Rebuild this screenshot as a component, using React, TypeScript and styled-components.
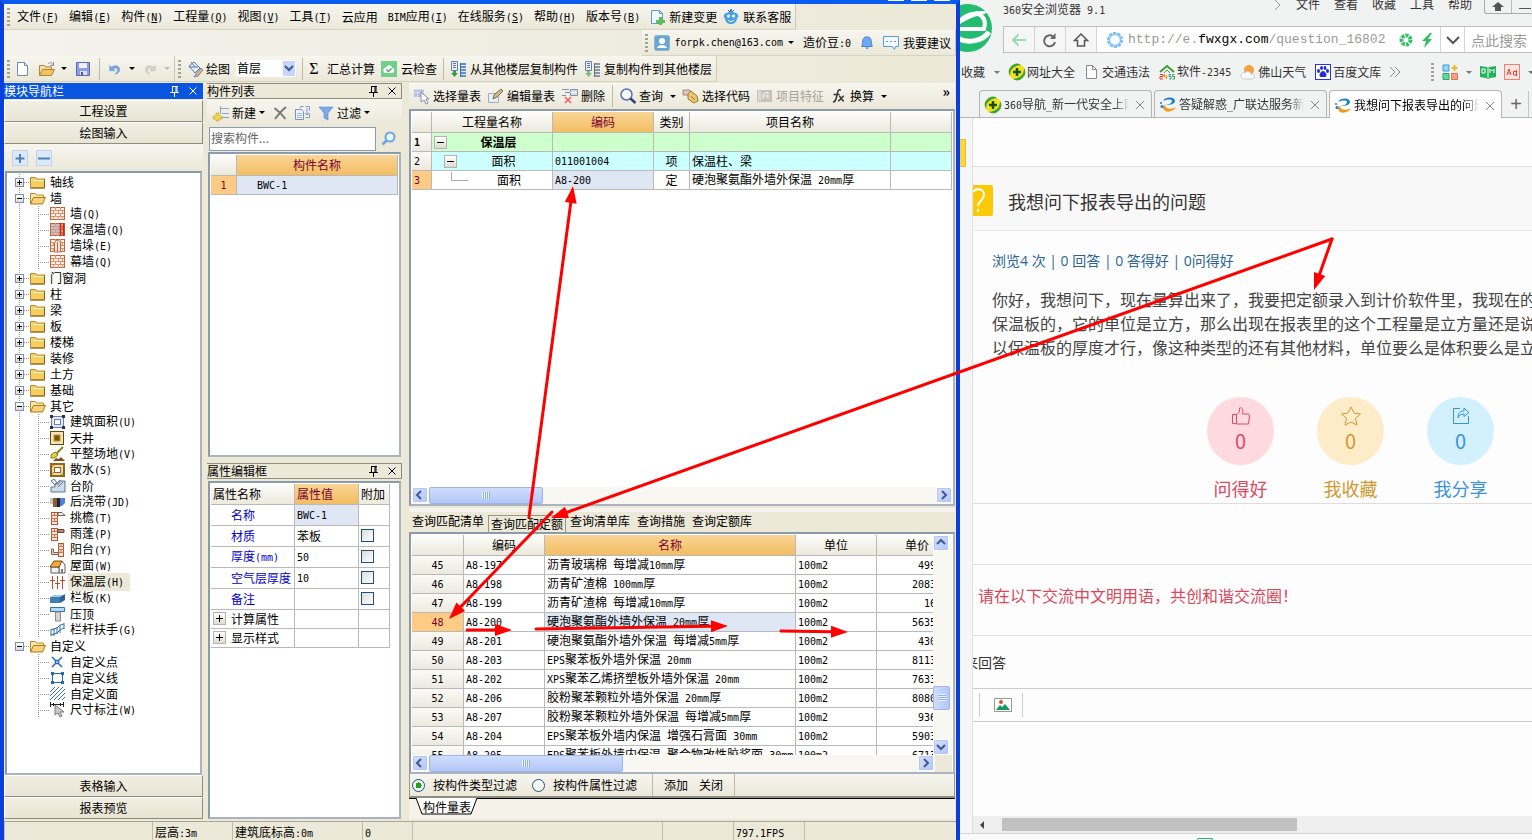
import React from "react";
import styled, { createGlobalStyle, css } from "styled-components";

const GlobalStyle = createGlobalStyle`
  *, *::before, *::after { box-sizing: border-box; }
  html, body { margin: 0; padding: 0; }
  body {
    font-family: "Noto Sans CJK SC", "Liberation Sans", sans-serif;
    font-size: 12px;
    line-height: 16px;
    color: #000;
    overflow: hidden;
  }
  button, input, select, textarea { font: inherit; color: inherit; margin: 0; }
  button { padding: 0; border: 0; background: none; white-space: nowrap; }
  a { color: inherit; text-decoration: none; }
  h1, h2, p, ul { margin: 0; padding: 0; font-weight: inherit; font-size: inherit; list-style: none; }
  svg { display: block; flex: none; }
`;

/* ---------- text ---------- */

const Half = styled.span`
  font-family: "DejaVu Sans Mono", monospace;
  font-size: 10px;
  white-space: pre;
`;

/** Sets the latin runs of a label in a half-width face beside full-width characters. */
function Txt({ children }: { children: string }) {
  return (
    <>
      {children.split(/([\x20-\x7e]+)/).map((part, i) =>
        /^[\x20-\x7e]+$/.test(part) ? <Half key={i}>{part}</Half> : part
      )}
    </>
  );
}

/* ---------- icons ---------- */

type IconName = string;

const brick = (
  <>
    <rect x="0.500" y="1.500" width="14" height="12" fill="#fdeee4" stroke="#c4623a" />
    <path d="M1 4.500h13M1 7.500h13M1 10.500h13M5.500 1v3M10.500 1v3M3.500 5v3M8.500 5v3M12.500 5v3M5.500 8v3M10.500 8v3M3.500 11v3M8.500 11v3M12.500 11v3" stroke="#dd9470" fill="none" />
  </>
);

const copyFloors = (flip: boolean) => (
  <>
    <path d="M1.500 0.500h6v9h-6z" fill="#e8eef8" stroke="#6b7f9e" />
    <path d="M3 2.500h3M3 4.500h3M3 6.500h3" stroke="#5b77b5" />
    <path d="M10 3h6M10 6h6M10 9h6M10 12h6M10 15h6" stroke={flip ? "#8b96a6" : "#5b8fdc"} strokeWidth="2" />
    <path d="M10.500 2v14" stroke={flip ? "#68717e" : "#3f6cb0"} />
    <path d="M3 10v2H1l3.500 4L8 12H6v-2z" fill={flip ? "#7fc07f" : "#3f9a4f"} />
  </>
);

const icons: Record<IconName, React.ReactNode> = {
  folder: (
    <>
      <path d="M0.500 3.500h5l1 1.500h8v9h-14z" fill="#f6cd62" stroke="#b58a2c" />
      <path d="M1 6.500h13" stroke="#fff0b8" />
      <path d="M14.500 5v9h-14" stroke="#7d6018" fill="none" />
    </>
  ),
  folderOpen: (
    <>
      <path d="M0.500 13.500v-10h5l1 1.500h7v3" fill="#f9e6ae" stroke="#b58a2c" />
      <path d="M3.500 7.500h12l-3 6.500h-12z" fill="#f8d276" stroke="#a57b22" />
    </>
  ),
  wall: brick,
  wallIns: (
    <>
      {brick}
      <path d="M1 2h8v11H1z" fill="#b9a5a8" opacity="0.700" />
      <path d="M10.500 1v13M13.500 1v13" stroke="#c22f1c" strokeWidth="2" />
    </>
  ),
  wallPier: (
    <>
      {brick}
      <path d="M4.500 4.500c2-3 4-3 6 0V14h-6z" fill="#fde9dc" stroke="#c4623a" />
      <path d="M7.500 4v10" stroke="#c4623a" />
    </>
  ),
  area: (
    <>
      <rect x="1.500" y="2.500" width="12" height="11" fill="#dfe7f5" stroke="#6d7fa5" />
      <rect x="4.500" y="5.500" width="6" height="5" fill="#fff" stroke="#6d7fa5" />
      <path d="M0 1h3v3H0zM12 1h3v3h-3zM0 12h3v3H0zM12 12h3v3h-3z" fill="#26324c" />
    </>
  ),
  patio: (
    <>
      <rect x="0.500" y="1.500" width="13" height="13" fill="#f2e7b4" stroke="#5d4a14" />
      <rect x="4" y="5" width="6" height="6" fill="#7a5510" stroke="#c49a35" />
    </>
  ),
  ground: (
    <>
      <path d="M13 1L6 8" stroke="#7f8a1e" strokeWidth="2" />
      <path d="M1 9l4-3 3 3-4 3-3 0z" fill="#e6d23a" stroke="#8a7a18" />
      <path d="M3 15l3-3 3 1 2-2 4 4z" fill="#8a4a17" />
    </>
  ),
  apron: (
    <>
      <rect x="1" y="2" width="13" height="12" fill="#f1d9a3" stroke="#8d6420" strokeWidth="2" />
      <rect x="4.500" y="5.500" width="6" height="5" fill="#fff" stroke="#8d6420" />
      <path d="M2 5l2-2M11 13l2-2M2 12l2-2" stroke="#b4822f" />
    </>
  ),
  steps: (
    <>
      <path d="M1 14V9h4V6h4V3h6v11z" fill="#cfdbe8" stroke="#5c7690" />
      <path d="M1 3l4 4 2-2-3-4z" fill="#e9eef4" stroke="#5c7690" />
      <path d="M5 6l6-4M8 9l5-5" stroke="#5c7690" />
    </>
  ),
  band: (
    <>
      <rect x="0" y="4" width="5" height="6" fill="#c9c2c0" />
      <rect x="3" y="4" width="4" height="9" fill="#8e5a35" />
      <rect x="7" y="4" width="3" height="9" fill="#1c2238" />
      <path d="M10 4h5v5l-3 3h-2z" fill="#4f7fd0" />
    </>
  ),
  eave: (
    <>
      <rect x="1.500" y="2.500" width="6" height="12" fill="#fbe6d8" stroke="#b9532d" />
      <path d="M1 5.500h7M1 8.500h7M1 11.500h7M4.500 3v3M4.500 9v3" stroke="#c8714d" />
      <path d="M8 2.500h4l3 3H8z" fill="#f0efe6" stroke="#6c6251" />
    </>
  ),
  canopy: (
    <>
      <rect x="1.500" y="2.500" width="6" height="12" fill="#fbe6d8" stroke="#b9532d" />
      <path d="M1 5.500h7M1 8.500h7M1 11.500h7M4.500 3v3M4.500 9v3" stroke="#c8714d" />
      <path d="M8 3.500h6v3H8z" fill="#b58b7a" stroke="#6c4033" />
    </>
  ),
  balcony: (
    <>
      <rect x="8.500" y="1.500" width="5" height="13" fill="#fbe6d8" stroke="#b9532d" />
      <path d="M8 4.500h6M8 7.500h6M8 10.500h6M11 2v3M11 8v3" stroke="#c8714d" />
      <path d="M1.500 7v5.500h7v-2h-5V7z" fill="#e5d5cd" stroke="#8b5b48" />
    </>
  ),
  roof: (
    <>
      <path d="M9 7l3-4 3 4v8H9z" fill="#fff" stroke="#5c5c5c" />
      <path d="M1 9h8v6H1z" fill="#f1f1f1" stroke="#5c5c5c" />
      <path d="M0 9l4-6h8L9 9z" fill="#f0a93e" stroke="#7c4d11" />
      <path d="M11 11h2v4h-2z" fill="#7c7c7c" />
    </>
  ),
  insulation: (
    <path d="M2.500 2v13M7.500 2v13M12.500 2v13M0 6.500h5M5 9.500h5M10 6.500h5" stroke="#c24a2c" fill="none" />
  ),
  board: (
    <>
      <path d="M0 7h10v6H0z" fill="#3f7db5" />
      <path d="M0 7l4-2h11l-5 2z" fill="#9ccbec" />
      <path d="M10 7l5-3v6l-5 3z" fill="#2b6196" />
    </>
  ),
  coping: (
    <>
      <path d="M0.500 1.500h14v4H0.500z" fill="#b9d7f5" stroke="#2f6fb3" />
      <path d="M5.500 6h5v9h-5z" fill="#d5d5d5" stroke="#8b8b8b" />
    </>
  ),
  rail: (
    <path d="M1 7v7M4 6v8M7 5v7M10 3v8M14 1v6M1 8l3-1 3-1 3-3 4-1M1 13l6-2 3-3 4-2" stroke="#2f6fb3" fill="none" />
  ),
  point: <path d="M2 3l4 4M12 3L8 7M2 13l4-4M12 13L8 9M5.500 6.500h3v3h-3z" stroke="#2668b8" fill="none" strokeWidth="1.500" />,
  lineShape: (
    <>
      <path d="M2.500 3.500h10v9h-10z" fill="none" stroke="#2668b8" />
      <path d="M1 2h3v3H1zM11 2h3v3h-3zM1 11h3v3H1zM11 11h3v3h-3z" fill="#2668b8" />
    </>
  ),
  face: (
    <path d="M0 6l5-5M0 10l9-9M0 14l13-13M4 14L15 3M8 14l7-7M12 14l3-3" stroke="#3d6ea8" fill="none" />
  ),
  dimension: (
    <>
      <path d="M0.500 0v5M13.500 0v5M1 2.500h12M3.500 1v3M10.500 1v3" stroke="#222" />
      <path d="M5 3v10l3-2 2 4 2-1-2-4h4z" fill="#c9c9c9" stroke="#7b7b7b" />
    </>
  ),
  newFile: (
    <>
      <path d="M2.500 1.500h7l3 3v10h-10z" fill="#fff" stroke="#7488ab" />
      <path d="M9.500 1.500v3h3" fill="#dbe5f5" stroke="#7488ab" />
    </>
  ),
  open: (
    <>
      <path d="M0.500 14V4.500h5l1 1.500h6v3" fill="#f7e0a0" stroke="#a98540" />
      <path d="M3.500 8.500h12l-3 6h-12z" fill="#f5c45c" stroke="#a98540" />
      <path d="M9 3c2-2 4-2 5 1M14.500 1v3.500H11" stroke="#8b94a3" fill="none" />
    </>
  ),
  save: (
    <>
      <path d="M1.500 1.500h13v13h-13z" fill="#8f9ce0" stroke="#5a68b4" />
      <path d="M4 2h8v5H4z" fill="#eef2ff" />
      <path d="M5 10h7v4H5z" fill="#dfe2ee" />
      <path d="M6 11h2v3H6z" fill="#4a5aa8" />
    </>
  ),
  undo: (
    <path d="M2 4v6h6L6 8c2-2 5-1 5 1 0 2-1 3-3 5 4-1 6-4 5-7-1-3-5-4-9-1z" fill="#7aa7e8" stroke="#4f7fc8" strokeWidth="0.500" />
  ),
  redo: (
    <path d="M14 4v6H8l2-2c-2-2-5-1-5 1 0 2 1 3 3 5-4-1-6-4-5-7 1-3 5-4 9-1z" fill="#d5d3c8" stroke="#bdbbb0" strokeWidth="0.500" />
  ),
  paint: (
    <>
      <path d="M2 5l5-4 6 6-5 5z" fill="#e3ecf8" stroke="#5d7ba6" />
      <path d="M4 1l4 5M2 6h9" stroke="#5d7ba6" fill="none" />
      <path d="M9 13l5-6 2 2-5 6-4 1z" fill="#e7b45c" stroke="#6d86c4" />
    </>
  ),
  cloudCheck: (
    <>
      <rect width="16" height="16" fill="#6fcf8b" />
      <path d="M3 11c-2-3 1-5 2-4 1-4 6-3 6 0 3 0 3 5 0 5H4z" fill="#fff" />
      <path d="M5.500 8.500l2 2 3-3" stroke="#3fb065" fill="none" strokeWidth="1.500" />
    </>
  ),
  copyFrom: copyFloors(false),
  copyTo: copyFloors(true),
  change: (
    <>
      <path d="M1.500 1.500h8l3 3v10h-11z" fill="#eef6ff" stroke="#5a9ad6" />
      <path d="M9.500 1.500v3h3" fill="none" stroke="#5a9ad6" />
      <path d="M9 8h3v3h3v3h-3v2H9v-2H6v-3h3z" fill="#5fc04e" />
    </>
  ),
  service: (
    <>
      <path d="M1 6c1-2 2-2 3-2 2-2 6-2 8 0 1 0 2 0 3 2 1 1 0 3-1 3 0 8-12 8-12 0-1 0-2-2-1-3z" fill="#4aa3e0" />
      <circle cx="5.500" cy="7" r="1.500" fill="#fff" />
      <circle cx="10.500" cy="7" r="1.500" fill="#fff" />
      <path d="M5 11c2 2 4 2 6 0" stroke="#fff" fill="none" />
      <path d="M5 1l2 2 1-3 1 3 2-2" stroke="#2a80c0" fill="none" />
    </>
  ),
  user: (
    <>
      <rect x="0.500" y="0.500" width="15" height="15" rx="2" fill="#6aa6cf" stroke="#8bb7d6" />
      <circle cx="8" cy="6" r="3" fill="#fff" />
      <path d="M3 13c1-4 9-4 10 0z" fill="#fff" />
    </>
  ),
  bell: (
    <>
      <path d="M8 1c4 0 5 3 5 6 0 3 1 4 1 5H2c0-1 1-2 1-5 0-3 1-6 5-6z" fill="#6ba8f5" stroke="#3f7ac8" />
      <path d="M6 13h4l-2 2z" fill="#3f7ac8" />
    </>
  ),
  speech: (
    <>
      <path d="M0.500 1.500h15v10h-3l-1 3-2-3h-9z" fill="#f2f8ff" stroke="#5a9ad6" />
      <path d="M3 6.500h2M7 6.500h2M11 6.500h2" stroke="#5a9ad6" />
    </>
  ),
  newItem: (
    <>
      <path d="M7 3.500h9M9 8.500h7M8 12.500h8M7.500 1v8" stroke="#8aa5c8" fill="none" />
      <path d="M3 8h3v3h3v3H6v2H3v-2H0v-3h3z" fill="#f4d84a" stroke="#b09018" strokeWidth="0.500" />
    </>
  ),
  cross: <path d="M2.500 3c4 3 8 7 11 11M14 2C9 6 6 10 3 14" stroke="#777" strokeWidth="2" fill="none" />,
  copy: (
    <>
      <path d="M0.500 4.500h6l2 2v8h-8z" fill="#eef3fb" stroke="#7d94b8" />
      <path d="M2 8.500h5M2 10.500h5M2 12.500h5" stroke="#a7b6d0" />
      <path d="M5.500 3V1.500h3M10.500 1.500h4M14.500 1.500v4M14.500 8.500v4h-4M12 3v7M10 8l2 2 2-2" stroke="#7da0d4" fill="none" />
    </>
  ),
  filter: <path d="M1 2h14l-5 6v7l-4-2V8z" fill="#7faaea" stroke="#4778c0" strokeWidth="0.500" />,
  magnifier: (
    <>
      <circle cx="9" cy="6" r="4.500" fill="#e8f4ff" stroke="#6aa7dd" strokeWidth="2" />
      <path d="M5.500 9.500l-4 4" stroke="#6aa7dd" strokeWidth="2.500" />
    </>
  ),
  query: (
    <>
      <circle cx="6.500" cy="6.500" r="5.500" fill="#f4f8ff" stroke="#5a74a8" strokeWidth="1.500" />
      <path d="M10.500 10.500l5 4.500" stroke="#3c3c80" strokeWidth="2.500" />
    </>
  ),
  selectList: (
    <>
      <path d="M0 1h10v8H0z" fill="#b6c0dc" />
      <path d="M0 1.500h10M0 4.500h10M3.500 1v8" stroke="#d6dcec" />
      <path d="M7 4v10l3-2 2 4 2-1-2-4h3z" fill="#fff" stroke="#7c8db5" />
    </>
  ),
  editList: (
    <>
      <path d="M0.500 5.500h10v9h-10z" fill="#e9eff8" stroke="#a0aec4" />
      <path d="M5 11l1-4 7-6 2 2-6 6z" fill="#d9b98a" stroke="#7b6a4a" />
    </>
  ),
  removeRow: (
    <>
      <path d="M0 1.500h7M3 4.500h5M0 7.500h4" stroke="#8390ac" />
      <path d="M8.500 1.500h7v6h-7z" fill="#d4dbec" stroke="#8390ac" />
      <path d="M8 4.500h7" stroke="#fff" />
      <path d="M3 9l6 6M9 9l-6 6" stroke="#f05a5a" strokeWidth="1.500" />
    </>
  ),
  selectCode: (
    <>
      <path d="M0 2h7v5H0z" fill="#d9c7c0" stroke="#a58878" />
      <path d="M5 6l3-3 6 5 1 5-4 2-6-4z" fill="#ebc56f" stroke="#a07a2f" />
      <path d="M8 8l4 4" stroke="#a07a2f" />
    </>
  ),
  feature: (
    <>
      <path d="M0 2h15v12H0z" fill="#c5c3bb" />
      <path d="M6 11V6l5-2v7M6 8h5" stroke="#f4f3ee" fill="none" />
      <path d="M1 3h3v10H1z" fill="#dddbd3" />
    </>
  ),
  fx: (
    <path d="M10 2c-3-1-3 1-4 5s-1 7-4 7M2.500 6.500h6M8 8c2 0 2 5 5 5M13 8c-2 0-4 5-6 5" stroke="#333" fill="none" strokeWidth="1.500" />
  ),
  plusBox: (
    <>
      <rect x="0.500" y="0.500" width="15" height="15" fill="#dce9f8" stroke="#bfd2ea" />
      <path d="M8 4v9M3.500 8.500h9" stroke="#4f80b4" strokeWidth="2" />
    </>
  ),
  minusBox: (
    <>
      <rect x="0.500" y="0.500" width="15" height="15" fill="#dce9f8" stroke="#bfd2ea" />
      <path d="M2 8.500h12" stroke="#4f80b4" strokeWidth="2" />
    </>
  ),
  pin: <path d="M5 3.500h6M5.500 3.500v6M9 3v7M10 3v7M3 9.500h9M7.500 10v4" stroke="currentColor" fill="none" />,
  close: <path d="M4.500 4.500l7 7M11.500 4.500l-7 7" stroke="currentColor" fill="none" />,
  nav360: (
    <>
      <circle cx="8" cy="8" r="8" fill="#f3e11a" />
      <path d="M12 1a8 8 0 0 0-11 11C1 5 5 2 12 1zM4 15a8 8 0 0 0 11-11C15 11 11 14 4 15z" fill="#3da531" />
      <path d="M8 4v8M4 8h8" stroke="#14501a" strokeWidth="2.500" />
    </>
  ),
  page: <path d="M2.500 1.500h6l4 4v9h-10zM8.500 1.500v4h4" fill="#fafafa" stroke="#888" />,
  house: (
    <>
      <path d="M1 8l7-6 7 6" stroke="#3a9f3a" fill="none" strokeWidth="2" />
      <path d="M5 9l3-3 3 3" stroke="#5b8a3b" fill="none" />
      <path d="M1 10.500h3v2H1v2.500h3" stroke="#e33" fill="none" />
      <path d="M5.500 10v3h3M7.500 11v4" stroke="#e90" fill="none" />
      <path d="M12 10.500h-2v2h2v2.500h-2" stroke="#29c" fill="none" />
      <path d="M15.500 10.500h-2v2h2v2.500h-2" stroke="#3a3" fill="none" />
    </>
  ),
  weather: (
    <>
      <circle cx="9" cy="6" r="5" fill="#f9a13a" />
      <path d="M2 14c-3-4 1-6 3-5 2-3 6-1 6 1 5 0 4 5 1 5H3z" fill="#fff" stroke="#c2cad3" />
    </>
  ),
  baidu: (
    <>
      <rect x="0.500" y="0.500" width="15" height="15" fill="#fff" stroke="#2b35d8" />
      <path d="M8 7c3 0 5 6 2 6H6C3 13 5 7 8 7z" fill="#2430d5" />
      <ellipse cx="3.500" cy="7" rx="1.500" ry="2" fill="#2430d5" />
      <ellipse cx="6.500" cy="4" rx="1.500" ry="2" fill="#2430d5" />
      <ellipse cx="10" cy="4" rx="1.500" ry="2" fill="#2430d5" />
      <ellipse cx="12.500" cy="7" rx="1.500" ry="2" fill="#2430d5" />
    </>
  ),
  apps: (
    <>
      <path d="M1 1h6v6H1z" fill="#9bd4f5" stroke="#39a0dd" />
      <path d="M1 9.500h6v6H1z" fill="#63d69a" stroke="#1fae64" />
      <path d="M9.500 9.500h6v6h-6z" fill="#f9a38c" stroke="#ea6a4a" />
      <path d="M12.500 1v6M9.500 4h6" stroke="#f5b52c" strokeWidth="2" />
    </>
  ),
  book: (
    <>
      <path d="M0 2l7 1 1 1 1-1 7-1v11l-6 1-2 1-2-1-6-1z" fill="#21b35a" />
      <path d="M2 5h3v4H2zM8 4v10M10 9V5l2 2 2-2v4" stroke="#fff" fill="none" />
    </>
  ),
  translate: (
    <>
      <rect x="0.500" y="0.500" width="15" height="15" fill="#fde3e0" stroke="#e8857c" />
      <path d="M3 11l2-6 2 6M4 9h3" stroke="#e0483c" fill="none" />
      <path d="M9.500 7.500h3v3.500h-3zM12.500 6v6" stroke="#e0483c" fill="none" />
    </>
  ),
  glodon: (
    <>
      <path d="M3 4C6-1 15 0 15 4c0 3-5 4-9 4 4-1 6-2 6-4 0-2-5-2-9 0z" fill="#1c7fcb" />
      <path d="M5 8c0 4 6 5 11 2-3 6-12 6-13 1 0-2 1-3 2-3z" fill="#f29a1f" />
      <circle cx="1" cy="6" r="1" fill="#1c7fcb" />
      <circle cx="2" cy="9.500" r="1.500" fill="#1c7fcb" />
    </>
  ),
  site: (
    <>
      <circle cx="8" cy="8" r="6.500" fill="none" stroke="#76bdf3" strokeWidth="3" strokeDasharray="3 1" />
      <circle cx="8" cy="8" r="5.500" fill="#fff" stroke="#8ccaf8" strokeWidth="1.500" />
    </>
  ),
  aperture: (
    <>
      <circle cx="8" cy="8" r="4.500" fill="none" stroke="#3cbf6a" strokeWidth="4" strokeDasharray="3 1" />
      <circle cx="8" cy="8" r="2" fill="#fff" />
    </>
  ),
  bolt: <path d="M11 1L3 9h4l-2 7 8-9H9l4-6z" fill="#2fbf5d" />,
  back: <path d="M15 8H2M7.500 2.500L2 8l5.500 5.500" stroke="#9bdcb2" fill="none" strokeWidth="2" />,
  reload: (
    <>
      <path d="M13 10a5.500 5.500 0 1 1-2-5.500" stroke="#666" fill="none" strokeWidth="2" />
      <path d="M13.500 1v6H8z" fill="#666" />
    </>
  ),
  home: <path d="M1.500 8.500L8 2l6.500 6.500h-3V14h-7V8.500z" stroke="#555" fill="none" strokeWidth="1.500" />,
  chevron: <path d="M2 5l6 6 6-6" stroke="#555" fill="none" strokeWidth="2" />,
  picture: (
    <>
      <rect x="-0.500" y="1.500" width="17" height="13" fill="#fff" stroke="#999" />
      <circle cx="6" cy="5" r="2" fill="#d9502e" />
      <path d="M1 13l4-5 2 2 3-3 5 6z" fill="#149a5c" />
    </>
  ),
};

function Icon({ name, size = 16 }: { name: IconName; size?: number }) {
  return (
    <svg width={size} height={size} viewBox="0 0 16 16" aria-hidden="true" overflow="visible">
      {icons[name]}
    </svg>
  );
}

/* ---------- frame ---------- */

const Desktop = styled.div`
  position: relative;
  display: grid;
  grid-template-columns: minmax(0, 960fr) minmax(0, 572fr);
  height: 100vh;
  min-height: 720px;
  overflow: hidden;
`;

const AppWindow = styled.div`
  display: flex;
  flex-direction: column;
  min-width: 0;
  min-height: 0;
  background: #ece9d8;
  border: 4px solid #0a3fdc;
  border-top-color: #0a5cf0;
  border-bottom: 0;
  overflow: hidden;
`;

const CaptionButtons = styled.div`
  position: absolute;
  top: 0;
  right: calc(100% * 572 / 1532 + 10px);
  display: flex;
  gap: 7px;
`;

const CaptionStub = styled.span`
  width: 16px;
  height: 1px;
  background: #fff;
`;

const barSkin = css`
  background: linear-gradient(#f7f6ef, #ebe8d9);
`;

const BarRow = styled.div<{ $height: number; $end?: boolean }>`
  display: flex;
  flex: none;
  height: ${(p) => p.$height}px;
  justify-content: ${(p) => (p.$end ? "flex-end" : "flex-start")};
  background: linear-gradient(90deg, #f3f2ec, #ece9d8);
`;

const Bar = styled.div<{ $gap: number }>`
  display: flex;
  align-items: center;
  gap: ${(p) => p.$gap}px;
  padding: 0 4px 0 3px;
  border-right: 1px solid #cbc8b8;
  border-bottom: 1px solid #d6d3c4;
  white-space: nowrap;
  ${barSkin}
`;

const Group = styled.div<{ $gap: number }>`
  display: flex;
  align-items: center;
  gap: ${(p) => p.$gap}px;
`;

const Grip = styled.span<{ $tight?: boolean }>`
  flex: none;
  width: 3px;
  height: 18px;
  margin-right: ${(p) => (p.$tight ? -3 : 0)}px;
  background: repeating-linear-gradient(#a5a294 0 2px, transparent 2px 4px);
`;

const Sep = styled.span`
  flex: none;
  width: 1px;
  height: 22px;
  background: #bdbaa8;
`;

const ToolButton = styled.button<{ $gap?: number; $faded?: boolean }>`
  display: flex;
  align-items: center;
  gap: ${(p) => p.$gap ?? 4}px;
  ${(p) => p.$faded && "color: #a5a399;"}
`;

const Caret = styled.span<{ $faded?: boolean; $light?: boolean; $apart?: boolean }>`
  flex: none;
  width: 0;
  height: 0;
  margin-left: ${(p) => (p.$apart ? 4 : 0)}px;
  border: 3px solid transparent;
  border-bottom-width: 0;
  border-top-color: ${(p) => (p.$faded ? "#bbb" : p.$light ? "#777" : "#000")};
`;

const FloorSelect = styled.div`
  display: flex;
  width: 60px;
  height: 17px;
  background: #fff;
  position: relative;
  select {
    appearance: none;
    width: 100%;
    border: 0;
    background: transparent;
    padding: 0 0 0 1px;
    line-height: 14px;
    height: 16px;
    outline: 0;
  }
  svg {
    position: absolute;
    right: 1px;
    top: 1px;
    background: #c5d5fb;
    pointer-events: none;
  }
`;

const Sigma = styled.span`
  font-family: "Liberation Serif", serif;
  font-size: 16px;
  width: 10px;
`;

const menus: [string, string?][] = [
  ["文件", "F"],
  ["编辑", "E"],
  ["构件", "N"],
  ["工程量", "Q"],
  ["视图", "V"],
  ["工具", "T"],
  ["云应用"],
  ["BIM应用", "I"],
  ["在线服务", "S"],
  ["帮助", "H"],
  ["版本号", "B"],
];

function Toolbars() {
  return (
    <>
      <BarRow $height={26}>
        <Bar $gap={10}>
          <Grip $tight />
          {menus.map(([label, key]) => (
            <button key={label}>
              <Txt>{label}</Txt>
              {key && (
                <Half>
                  (<u>{key}</u>)
                </Half>
              )}
            </button>
          ))}
          <Group $gap={6}>
            <ToolButton $gap={3}>
              <Icon name="change" />
              新建变更
            </ToolButton>
            <ToolButton>
              <Icon name="service" />
              联系客服
            </ToolButton>
          </Group>
        </Bar>
      </BarRow>
      <BarRow $height={26} $end>
        <Bar $gap={9}>
          <Grip $tight />
          <ToolButton $gap={5}>
            <Icon name="user" />
            <Txt>forpk.chen@163.com</Txt>
            <Caret />
          </ToolButton>
          <span>
            <Txt>造价豆:0</Txt>
          </span>
          <ToolButton aria-label="通知">
            <Icon name="bell" size={14} />
          </ToolButton>
          <ToolButton>
            <Icon name="speech" />
            我要建议
          </ToolButton>
        </Bar>
      </BarRow>
      <BarRow $height={26}>
        <Bar $gap={8}>
          <Grip $tight />
          <ToolButton aria-label="新建">
            <Icon name="newFile" />
          </ToolButton>
          <ToolButton aria-label="打开" $gap={6}>
            <Icon name="open" />
            <Caret />
          </ToolButton>
          <ToolButton aria-label="保存">
            <Icon name="save" />
          </ToolButton>
          <Sep />
          <ToolButton aria-label="撤销" $gap={7}>
            <Icon name="undo" size={14} />
            <Caret />
          </ToolButton>
          <ToolButton aria-label="重做" $gap={7}>
            <Icon name="redo" size={14} />
            <Caret $faded />
          </ToolButton>
        </Bar>
        <Bar $gap={6}>
          <Grip />
          <ToolButton $gap={3}>
            <Icon name="paint" />
            绘图
          </ToolButton>
          <FloorSelect>
            <select aria-label="楼层" defaultValue="首层">
              <option>首层</option>
            </select>
            <svg width="12" height="15" viewBox="0 0 12 15">
              <path d="M2 5l4 4 4-4" stroke="#3d5a94" strokeWidth="2" fill="none" />
            </svg>
          </FloorSelect>
          <Sep />
          <ToolButton $gap={8}>
            <Sigma>Σ</Sigma>
            汇总计算
          </ToolButton>
          <ToolButton>
            <Icon name="cloudCheck" />
            云检查
          </ToolButton>
          <Sep />
          <ToolButton>
            <Icon name="copyFrom" />
            从其他楼层复制构件
          </ToolButton>
          <ToolButton>
            <Icon name="copyTo" />
            复制构件到其他楼层
          </ToolButton>
        </Bar>
      </BarRow>
    </>
  );
}

/* ---------- shared panel parts ---------- */

const Workspace = styled.div`
  display: grid;
  flex: 1;
  min-height: 0;
  grid-template-columns: 199px 195px minmax(0, 1fr);
  column-gap: 4px;
  padding: 1px 0 2px 0;
`;

const Column = styled.section`
  display: flex;
  flex-direction: column;
  min-width: 0;
  min-height: 0;
`;

const PanelTitle = styled.header<{ $active?: boolean }>`
  display: flex;
  flex: none;
  align-items: center;
  height: 16px;
  overflow: hidden;
  padding-right: 1px;
  line-height: 14px;
  color: ${(p) => (p.$active ? "#fff" : "#000")};
  background: ${(p) => (p.$active ? "#0a55e0" : "#ece9d8")};
  border: 1px solid ${(p) => (p.$active ? "#0a55e0" : "#8f8d80")};
  border-left: 0;
  h2 {
    flex: 1;
  }
  button + button {
    margin-left: 2px;
  }
`;

function Title({ children, active }: { children: string; active?: boolean }) {
  return (
    <PanelTitle $active={active}>
      <h2>{children}</h2>
      <button aria-label="固定">
        <Icon name="pin" />
      </button>
      <button aria-label="关闭">
        <Icon name="close" />
      </button>
    </PanelTitle>
  );
}

const Well = styled.div`
  background: #fff;
  border: 2px solid #8c9bab;
  border-right-color: #a9b4c0;
  border-bottom-color: #a9b4c0;
  min-height: 0;
  overflow: hidden;
`;

const Grid = styled.table<{ $width: string }>`
  table-layout: fixed;
  border-collapse: separate;
  border-spacing: 0;
  width: ${(p) => p.$width};
`;

const cell = css`
  padding: 0 2px;
  border-right: 1px solid #b9b9b9;
  border-bottom: 1px solid #b9b9b9;
  overflow: hidden;
  white-space: nowrap;
  font-weight: 400;
`;

const Th = styled.th<{ $hot?: boolean; $left?: boolean }>`
  ${cell}
  height: 21px;
  text-align: ${(p) => (p.$left ? "left" : "center")};
  color: ${(p) => (p.$hot ? "#7a0030" : "#000")};
  background: ${(p) => (p.$hot ? "linear-gradient(#f9d595, #f3bd63)" : "linear-gradient(#fdfdfa, #ece9dc)")};
`;

const RowHead = styled.th<{ $hot?: boolean; $left?: boolean; $bold?: boolean }>`
  ${cell}
  text-align: ${(p) => (p.$left ? "left" : "center")};
  font-weight: ${(p) => (p.$bold ? 700 : 400)};
  color: ${(p) => (p.$hot ? "#7a0030" : "#000")};
  background: ${(p) => (p.$hot ? "#fdcb83" : "linear-gradient(#fbfaf6, #eceadf)")};
`;

const Td = styled.td<{ $sel?: boolean; $center?: boolean; $bold?: boolean }>`
  ${cell}
  text-align: ${(p) => (p.$center ? "center" : "left")};
  font-weight: ${(p) => (p.$bold ? 700 : 400)};
  ${(p) => p.$sel && "background: #dfe7f5;"}
`;

const Tr = styled.tr<{ $height?: number; $tint?: string }>`
  height: ${(p) => p.$height ?? 19}px;
  line-height: 16px;
  background: ${(p) => p.$tint ?? "#fff"};
`;

/* ---------- navigation ---------- */

const NavButton = styled.button`
  flex: none;
  height: 22px;
  text-align: center;
  background: linear-gradient(#f1efe3, #e8e5d4);
  border: 1px solid #fff;
  border-right-color: #8f8d80;
  border-bottom-color: #8f8d80;
`;

const NavTools = styled.div`
  display: flex;
  flex: none;
  align-items: center;
  gap: 8px;
  height: 27px;
  padding-left: 8px;
  ${barSkin}
`;

const TreeWell = styled(Well)`
  flex: 1;
  margin: 0 1px;
  padding-top: 1px;
`;

const TreeRow = styled.li<{ $depth: number; $trunk: boolean }>`
  display: flex;
  align-items: center;
  height: 16px;
  padding-left: ${(p) => (p.$depth ? 31 : 8)}px;
  white-space: nowrap;
  background-image: ${(p) =>
    [p.$trunk, p.$depth > 0]
      .map((on) => (on ? "repeating-linear-gradient(#999 0 1px, transparent 1px 2px)" : "none"))
      .join(", ")};
  background-repeat: no-repeat;
  background-size: 1px 16px;
  background-position: 12px 0, 31px 0;
`;

const Twig = styled.span<{ $width: number }>`
  flex: none;
  width: ${(p) => p.$width}px;
  height: 1px;
  margin-right: 1px;
  background: repeating-linear-gradient(90deg, #999 0 1px, transparent 1px 2px);
`;

const TreeLabel = styled.span<{ $sel?: boolean }>`
  margin-left: 2px;
  padding: 0 6px 0 2px;
  background: ${(p) => (p.$sel ? "#ece9d8" : "transparent")};
`;

const Expander = styled.button<{ $size: number }>`
  flex: none;
  width: ${(p) => p.$size}px;
  height: ${(p) => p.$size}px;
  border: 1px solid ${(p) => (p.$size > 9 ? "#b4b4ac" : "#7c8ea8")};
  background: linear-gradient(#fff, #dcdad0);
`;

function Toggle({ open, size = 9 }: { open: boolean; size?: number }) {
  const inner = size - 2;
  const mid = inner / 2;
  const reach = size > 9 ? 3.5 : 2.5;
  const bar = `M${mid - reach} ${mid}h${reach * 2}`;
  return (
    <Expander $size={size} aria-label={open ? "折叠" : "展开"}>
      <svg width={inner} height={inner} viewBox={`0 0 ${inner} ${inner}`}>
        <path d={open ? bar : `${bar}M${mid} ${mid - reach}v${reach * 2}`} stroke="#000" />
      </svg>
    </Expander>
  );
}

type Node = { label: string; open?: boolean; children?: [string, string][] };

const tree: Node[] = [
  { label: "轴线" },
  {
    label: "墙",
    open: true,
    children: [
      ["墙(Q)", "wall"],
      ["保温墙(Q)", "wallIns"],
      ["墙垛(E)", "wallPier"],
      ["幕墙(Q)", "wall"],
    ],
  },
  { label: "门窗洞" },
  { label: "柱" },
  { label: "梁" },
  { label: "板" },
  { label: "楼梯" },
  { label: "装修" },
  { label: "土方" },
  { label: "基础" },
  {
    label: "其它",
    open: true,
    children: [
      ["建筑面积(U)", "area"],
      ["天井", "patio"],
      ["平整场地(V)", "ground"],
      ["散水(S)", "apron"],
      ["台阶", "steps"],
      ["后浇带(JD)", "band"],
      ["挑檐(T)", "eave"],
      ["雨蓬(P)", "canopy"],
      ["阳台(Y)", "balcony"],
      ["屋面(W)", "roof"],
      ["保温层(H)", "insulation"],
      ["栏板(K)", "board"],
      ["压顶", "coping"],
      ["栏杆扶手(G)", "rail"],
    ],
  },
  {
    label: "自定义",
    open: true,
    children: [
      ["自定义点", "point"],
      ["自定义线", "lineShape"],
      ["自定义面", "face"],
      ["尺寸标注(W)", "dimension"],
    ],
  },
];

function Navigation() {
  return (
    <Column>
      <Title active>模块导航栏</Title>
      <Gap $size={1} />
      <NavButton>工程设置</NavButton>
      <NavButton>绘图输入</NavButton>
      <NavTools>
        <button aria-label="全部展开">
          <Icon name="plusBox" size={16} />
        </button>
        <button aria-label="全部折叠">
          <Icon name="minusBox" size={16} />
        </button>
      </NavTools>
      <TreeWell>
        <ul>
          {tree.map((node, i) => (
            <React.Fragment key={node.label}>
              <TreeRow $depth={0} $trunk={i < tree.length - 1}>
                <Toggle open={!!node.open} />
                <Twig $width={5} />
                <Icon name={node.open ? "folderOpen" : "folder"} />
                <TreeLabel>{node.label}</TreeLabel>
              </TreeRow>
              {node.children?.map(([label, icon]) => (
                <TreeRow $depth={1} $trunk={i < tree.length - 1} key={label}>
                  <Twig $width={11} />
                  <Icon name={icon} />
                  <TreeLabel $sel={icon === "insulation"}>
                    <Txt>{label}</Txt>
                  </TreeLabel>
                </TreeRow>
              ))}
            </React.Fragment>
          ))}
        </ul>
      </TreeWell>
      <NavButton>表格输入</NavButton>
      <NavButton>报表预览</NavButton>
    </Column>
  );
}

/* ---------- component list and properties ---------- */

const ListTools = styled.div`
  display: flex;
  flex: none;
  align-items: center;
  gap: 7px;
  height: 27px;
  padding-left: 6px;
  ${barSkin}
`;

const SearchRow = styled.div`
  display: flex;
  flex: none;
  align-items: center;
  gap: 5px;
  height: 26px;
  padding: 0 5px 0 2px;
  input {
    flex: 1;
    min-width: 0;
    height: 24px;
    padding: 0 1px 4px;
    border: 1px solid #8c9bab;
    background: #fff;
    outline: 0;
  }
  input::placeholder {
    color: #666;
    opacity: 1;
  }
`;

const StretchWell = styled(Well)<{ $grow: number }>`
  flex: ${(p) => p.$grow} 1 0;
  margin: 0 1px;
  padding: 1px;
`;

const Gap = styled.div<{ $size: number }>`
  flex: none;
  height: ${(p) => p.$size}px;
`;

const PropName = styled.td<{ $group?: boolean }>`
  ${cell}
  padding-left: ${(p) => (p.$group ? 2 : 20)}px;
  color: ${(p) => (p.$group ? "#000" : "#0000c8")};
`;

const Check = styled.input.attrs({ type: "checkbox" })`
  appearance: none;
  display: block;
  width: 13px;
  height: 13px;
  border: 1px solid #1c5180;
  background: linear-gradient(135deg, #dcdcd7, #fff);
`;

const props: [string, string, boolean][] = [
  ["名称", "BWC-1", false],
  ["材质", "苯板", true],
  ["厚度(mm)", "50", true],
  ["空气层厚度", "10", true],
  ["备注", "", true],
];

function Components() {
  return (
    <Column>
      <Title>构件列表</Title>
      <ListTools>
        <ToolButton $gap={3}>
          <Icon name="newItem" />
          新建
          <Caret />
        </ToolButton>
        <ToolButton aria-label="删除">
          <Icon name="cross" />
        </ToolButton>
        <ToolButton aria-label="复制">
          <Icon name="copy" />
        </ToolButton>
        <ToolButton $gap={3}>
          <Icon name="filter" />
          过滤
          <Caret />
        </ToolButton>
      </ListTools>
      <SearchRow>
        <input type="text" aria-label="搜索构件" placeholder="搜索构件..." />
        <button aria-label="搜索">
          <Icon name="magnifier" />
        </button>
      </SearchRow>
      <StretchWell $grow={306}>
        <Grid $width="100%">
          <colgroup>
            <col style={{ width: 26 }} />
            <col />
          </colgroup>
          <thead>
            <tr>
              <Th />
              <Th $hot>构件名称</Th>
            </tr>
          </thead>
          <tbody>
            <Tr>
              <RowHead $hot>
                <Half>1</Half>
              </RowHead>
              <Td $sel>
                <Txt>{"   BWC-1"}</Txt>
              </Td>
            </Tr>
          </tbody>
        </Grid>
      </StretchWell>
      <Gap $size={6} />
      <Title>属性编辑框</Title>
      <Gap $size={2} />
      <StretchWell $grow={340}>
        <Grid $width="179px">
          <colgroup>
            <col style={{ width: 84 }} />
            <col style={{ width: 64 }} />
            <col style={{ width: 31 }} />
          </colgroup>
          <thead>
            <tr>
              <Th $left>属性名称</Th>
              <Th $left $hot>
                属性值
              </Th>
              <Th $left>附加</Th>
            </tr>
          </thead>
          <tbody>
            {props.map(([name, value, extra], i) => (
              <Tr $height={21} key={name}>
                <PropName>
                  <Txt>{name}</Txt>
                </PropName>
                <Td $sel={i === 0}>
                  <Txt>{value}</Txt>
                </Td>
                <Td>{extra && <Check aria-label={`${name} 附加`} />}</Td>
              </Tr>
            ))}
            {["计算属性", "显示样式"].map((name) => (
              <Tr key={name}>
                <PropName $group>
                  <Group $gap={5}>
                    <Toggle open={false} size={13} />
                    {name}
                  </Group>
                </PropName>
                <Td />
                <Td />
              </Tr>
            ))}
          </tbody>
        </Grid>
      </StretchWell>
    </Column>
  );
}

/* ---------- quantity sheets ---------- */

const SheetBar = styled.div`
  display: flex;
  flex: none;
  align-items: center;
  gap: 7px;
  height: 26px;
  padding: 0 5px;
  white-space: nowrap;
  ${barSkin}
`;

const More = styled.button`
  margin-left: auto;
  font-weight: 700;
  font-size: 14px;
  line-height: 10px;
  align-self: flex-start;
  padding-top: 3px;
`;

const ScrollWell = styled(Well)<{ $grow: number }>`
  display: flex;
  flex-direction: column;
  flex: ${(p) => p.$grow} 1 0;
  padding: 1px 1px 0 1px;
`;

const Clip = styled.div`
  flex: 1;
  min-width: 0;
  min-height: 0;
  overflow: hidden;
`;

const Side = styled.div`
  display: flex;
  flex: 1;
  min-height: 0;
`;

const Track = styled.div<{ $vertical?: boolean }>`
  display: flex;
  flex: none;
  flex-direction: ${(p) => (p.$vertical ? "column" : "row")};
  gap: 1px;
  ${(p) => (p.$vertical ? "width: 19px; padding-right: 2px;" : "height: 17px;")}
  background: #f8f7f2;
`;

const Arrow = styled.button`
  display: grid;
  place-items: center;
  flex: none;
  width: 16px;
  height: 16px;
  border: 1px solid #fff;
  border-radius: 2px;
  background: linear-gradient(135deg, #d5e0fd, #b3c7f7);
  box-shadow: inset 0 0 0 1px #b4c6ee;
`;

const Space = styled.span<{ $grow: number }>`
  flex: ${(p) => p.$grow} 1 0;
`;

const Thumb = styled.span<{ $vertical?: boolean; $size: string }>`
  display: grid;
  place-items: center;
  flex: 0 0 ${(p) => p.$size};
  border: 1px solid #9fb5e6;
  border-radius: 2px;
  background: ${(p) =>
    p.$vertical ? "linear-gradient(90deg, #cfdcfd, #b3c7f7)" : "linear-gradient(#cfdcfd, #b3c7f7)"};
  &::after {
    content: "";
    width: 8px;
    height: 7px;
    background: repeating-linear-gradient(
      ${(p) => (p.$vertical ? "180deg" : "90deg")},
      #eef4fe 0 1px,
      #8cb0f8 1px 2px
    );
  }
`;

const Corner = styled.span`
  flex: none;
  width: 17px;
  background: #ece9d8;
`;

const glyphs = {
  left: "M6 1L2 5l4 4",
  right: "M3 1l4 4-4 4",
  up: "M1 6l4-4 4 4",
  down: "M1 3l4 4 4-4",
};

function ScrollArrow({ dir }: { dir: keyof typeof glyphs }) {
  return (
    <Arrow aria-label={`scroll ${dir}`}>
      <svg width="10" height="10" viewBox="0 0 10 10">
        <path d={glyphs[dir]} stroke="#3d5a94" strokeWidth="2" fill="none" />
      </svg>
    </Arrow>
  );
}

const TreeCell = styled.span<{ $indent: number }>`
  display: flex;
  align-items: center;
  padding-left: ${(p) => p.$indent}px;
  > span {
    flex: 1;
    text-align: center;
  }
`;

const Elbow = styled.i`
  flex: none;
  align-self: flex-start;
  width: 17px;
  height: 9px;
  border-left: 1px solid #aaa;
  border-bottom: 1px solid #aaa;
`;

const Tabs = styled.div`
  display: flex;
  flex: none;
  align-items: flex-end;
  height: 24px;
  border-top: 4px solid #f5f4ee;
`;

const Tab = styled.button<{ $active?: boolean }>`
  flex: none;
  height: ${(p) => (p.$active ? 17 : 20)}px;
  padding: 0 2px ${(p) => (p.$active ? 0 : 2)}px;
  margin-right: 1px;
  line-height: 16px;
  border: 1px solid ${(p) => (p.$active ? "#9a978a" : "transparent")};
  border-bottom: 0;
`;

const FilterBar = styled.div`
  display: flex;
  flex: none;
  align-items: center;
  gap: 11px;
  height: 24px;
  padding: 0 2px;
  border: 1px solid #9a9a92;
  border-top: 0;
  border-bottom: 2px solid #8f8d80;
  ${barSkin}
  label {
    display: flex;
    align-items: center;
    gap: 8px;
    margin-right: 4px;
  }
`;

const Radio = styled.input.attrs({ type: "radio" })`
  appearance: none;
  width: 13px;
  height: 13px;
  border: 1px solid #1c5180;
  border-radius: 50%;
  background: #f7f7f4;
  &:checked {
    background: radial-gradient(circle, #21a121 0 3px, #f7f7f4 3px);
  }
`;

const SheetTabs = styled.div`
  flex: none;
  height: 21px;
  padding-left: 6px;
  border-top: 1px solid #000;
  background: #f4f2e9;
`;

const SheetTab = styled.button`
  position: relative;
  display: block;
  width: 64px;
  height: 16px;
  svg {
    position: absolute;
    left: 0;
    top: -1px;
  }
  span {
    position: relative;
  }
`;

const PriceCell = styled.td`
  ${cell}
  padding-right: 21px;
  text-align: right;
`;

const quota: [number, string, string, string][] = [
  [45, "A8-197", "沥青玻璃棉 每增减10mm厚", "499"],
  [46, "A8-198", "沥青矿渣棉 100mm厚", "2083"],
  [47, "A8-199", "沥青矿渣棉 每增减10mm厚", "16"],
  [48, "A8-200", "硬泡聚氨酯外墙外保温 20mm厚", "5635"],
  [49, "A8-201", "硬泡聚氨酯外墙外保温 每增减5mm厚", "430"],
  [50, "A8-203", "EPS聚苯板外墙外保温 20mm", "8113"],
  [51, "A8-202", "XPS聚苯乙烯挤塑板外墙外保温 20mm", "7633"],
  [52, "A8-206", "胶粉聚苯颗粒外墙外保温 20mm厚", "8080"],
  [53, "A8-207", "胶粉聚苯颗粒外墙外保温 每增减5mm厚", "936"],
  [54, "A8-204", "EPS聚苯板外墙内保温 增强石膏面 30mm", "5903"],
  [55, "A8-205", "EPS聚苯板外墙内保温 聚合物改性胶浆面 30mm", "6713"],
];

const MainColumn = styled(Column)`
  padding: 0 1px 0 3px;
`;

function Sheets() {
  return (
    <MainColumn>
      <SheetBar>
        <ToolButton $gap={3}>
          <Icon name="selectList" />
          选择量表
        </ToolButton>
        <ToolButton $gap={3}>
          <Icon name="editList" />
          编辑量表
        </ToolButton>
        <ToolButton $gap={3}>
          <Icon name="removeRow" />
          删除
        </ToolButton>
        <Sep />
        <ToolButton $gap={3}>
          <Icon name="query" />
          查询
          <Caret $apart />
        </ToolButton>
        <ToolButton $gap={3}>
          <Icon name="selectCode" />
          选择代码
        </ToolButton>
        <ToolButton $gap={3} $faded disabled>
          <Icon name="feature" />
          项目特征
        </ToolButton>
        <ToolButton $gap={3}>
          <Icon name="fx" />
          换算
          <Caret $apart />
        </ToolButton>
        <More aria-label="更多">»</More>
      </SheetBar>
      <ScrollWell $grow={399}>
        <Clip>
          <Grid $width="100%">
            <colgroup>
              <col style={{ width: 20 }} />
              <col style={{ width: 121 }} />
              <col style={{ width: 101 }} />
              <col style={{ width: 36 }} />
              <col style={{ width: 201 }} />
              <col />
            </colgroup>
            <thead>
              <tr>
                <Th />
                <Th>工程量名称</Th>
                <Th $hot>编码</Th>
                <Th>类别</Th>
                <Th>项目名称</Th>
                <Th />
              </tr>
            </thead>
            <tbody>
              <Tr $tint="#ccffcc">
                <RowHead $left $bold>
                  <Half>1</Half>
                </RowHead>
                <Td $bold>
                  <TreeCell $indent={0}>
                    <Toggle open size={13} />
                    <span>保温层</span>
                  </TreeCell>
                </Td>
                <Td />
                <Td />
                <Td />
                <Td />
              </Tr>
              <Tr $tint="#ccffff">
                <RowHead $left>
                  <Half>2</Half>
                </RowHead>
                <Td>
                  <TreeCell $indent={10}>
                    <Toggle open size={13} />
                    <span>面积</span>
                  </TreeCell>
                </Td>
                <Td>
                  <Txt>011001004</Txt>
                </Td>
                <Td $center>项</Td>
                <Td>保温柱、梁</Td>
                <Td />
              </Tr>
              <Tr>
                <RowHead $left $hot>
                  <Half>3</Half>
                </RowHead>
                <Td>
                  <TreeCell $indent={17}>
                    <Elbow />
                    <span>面积</span>
                  </TreeCell>
                </Td>
                <Td $sel>
                  <Txt>A8-200</Txt>
                </Td>
                <Td $center>定</Td>
                <Td>
                  <Txt>硬泡聚氨酯外墙外保温 20mm厚</Txt>
                </Td>
                <Td />
              </Tr>
            </tbody>
          </Grid>
        </Clip>
        <Track>
          <ScrollArrow dir="left" />
          <Thumb $size="114px" />
          <Space $grow={1} />
          <ScrollArrow dir="right" />
        </Track>
      </ScrollWell>
      <Gap $size={2} />
      <Tabs>
        <Tab>查询匹配清单</Tab>
        <Tab $active>查询匹配定额</Tab>
        <Tab>查询清单库</Tab>
        <Tab>查询措施</Tab>
        <Tab>查询定额库</Tab>
      </Tabs>
      <ScrollWell $grow={242}>
        <Side>
          <Clip>
            <Grid $width="546px">
              <colgroup>
                <col style={{ width: 52 }} />
                <col style={{ width: 81 }} />
                <col style={{ width: 251 }} />
                <col style={{ width: 81 }} />
                <col style={{ width: 81 }} />
              </colgroup>
              <thead>
                <tr>
                  <Th />
                  <Th>编码</Th>
                  <Th $hot>名称</Th>
                  <Th>单位</Th>
                  <Th>单价</Th>
                </tr>
              </thead>
              <tbody>
                {quota.map(([no, code, name, price]) => (
                  <Tr key={no}>
                    <RowHead $hot={no === 48}>
                      <Half>{no}</Half>
                    </RowHead>
                    <Td>
                      <Txt>{code}</Txt>
                    </Td>
                    <Td $sel={no === 48}>
                      <Txt>{name}</Txt>
                    </Td>
                    <Td>
                      <Txt>100m2</Txt>
                    </Td>
                    <PriceCell>
                      <Txt>{price}</Txt>
                    </PriceCell>
                  </Tr>
                ))}
              </tbody>
            </Grid>
          </Clip>
          <Track $vertical>
            <ScrollArrow dir="up" />
            <Space $grow={136} />
            <Thumb $vertical $size="24px" />
            <Space $grow={28} />
            <ScrollArrow dir="down" />
          </Track>
        </Side>
        <Track>
          <ScrollArrow dir="left" />
          <Thumb $size="194px" />
          <Space $grow={1} />
          <ScrollArrow dir="right" />
          <Corner />
        </Track>
      </ScrollWell>
      <FilterBar>
        <label>
          <Radio name="filter" defaultChecked />
          按构件类型过滤
        </label>
        <label>
          <Radio name="filter" />
          按构件属性过滤
        </label>
        <Sep />
        <button>添加</button>
        <button>关闭</button>
        <Sep />
      </FilterBar>
      <SheetTabs>
        <SheetTab>
          <svg width="64" height="17" viewBox="0 0 64 17">
            <path d="M1 0l6 16h49L62 0" fill="#fff" stroke="#000" />
          </svg>
          <span>构件量表</span>
        </SheetTab>
      </SheetTabs>
    </MainColumn>
  );
}

/* ---------- status bar ---------- */

const StatusBar = styled.footer`
  display: flex;
  flex: none;
  height: 19px;
  border-top: 1px solid #a9a798;
  background: #ece9d8;
`;

const StatusCell = styled.span<{ $width: number }>`
  flex: 0 0 ${(p) => p.$width}px;
  padding: 2px 0 0 2px;
  border-left: 1px solid #bfbcab;
  white-space: nowrap;
`;

const Status = () => (
  <StatusBar>
    <StatusCell $width={148} />
    <StatusCell $width={80}>
      <Txt>层高:3m</Txt>
    </StatusCell>
    <StatusCell $width={130}>
      <Txt>建筑底标高:0m</Txt>
    </StatusCell>
    <StatusCell $width={50}>
      <Txt>0</Txt>
    </StatusCell>
    <StatusCell $width={250} />
    <StatusCell $width={71} />
    <StatusCell $width={71}>
      <Txt>797.1FPS</Txt>
    </StatusCell>
    <StatusCell $width={20} />
  </StatusBar>
);

/* ---------- browser ---------- */

const Browser = styled.div`
  display: flex;
  flex-direction: column;
  min-width: 0;
  min-height: 0;
  overflow: hidden;
  background: #f1f2f2;
  color: #333;
`;

const Head = styled.div`
  display: flex;
  flex: none;
  height: 57px;
`;

const Logo = styled.svg`
  margin-top: 4px;
  margin-right: 10px;
`;

const HeadRows = styled.div`
  flex: 1;
  min-width: 0;
`;

const TitleRow = styled.div`
  display: flex;
  height: 26px;
  line-height: 17px;
  white-space: nowrap;
  overflow: hidden;
`;

const BrowserMenu = styled.div`
  display: flex;
  align-items: flex-start;
  gap: 14px;
  margin-left: auto;
  margin-right: 12px;
  line-height: 8px;
`;

const WinButtons = styled.div`
  display: flex;
  flex: none;
  width: 48px;
  height: 14px;
  border: 1px solid #aaa;
  border-top: 0;
  border-right: 0;
  border-radius: 0 0 0 3px;
  button {
    flex: 0 0 27px;
    display: grid;
    place-items: center;
    border-right: 1px solid #bbb;
  }
`;

const Address = styled.div`
  display: flex;
  height: 27px;
  border: 1px solid #bfbfbf;
  border-right: 0;
  background: #fff;
`;

const AddressButton = styled.button<{ $plain?: boolean }>`
  display: grid;
  place-items: center;
  flex: none;
  width: ${(p) => (p.$plain ? 25 : 31)}px;
  border-right: 1px solid #d5d5d5;
  border-left: ${(p) => (p.$plain ? "1px solid #d5d5d5" : "0")};
  background: ${(p) => (p.$plain ? "#fff" : "#f6f6f6")};
`;

const Url = styled.div`
  display: flex;
  align-items: center;
  flex: 1;
  min-width: 0;
  gap: 5px;
  padding: 0 5px 0 10px;
  overflow: hidden;
  p {
    flex: 1;
    min-width: 0;
    overflow: hidden;
    white-space: nowrap;
    font-family: "Liberation Mono", monospace;
    font-size: 13px;
    color: #999;
  }
  b {
    font-weight: 400;
    color: #000;
  }
`;

const SearchBox = styled.input`
  flex: 0 0 67px;
  width: 67px;
  border: 0;
  padding: 0 0 0 6px;
  font-size: 14px;
  outline: 0;
  background: #fff;
  &::placeholder {
    color: #999;
    opacity: 1;
  }
`;

const Bookmarks = styled.nav`
  display: flex;
  flex: none;
  align-items: center;
  gap: 9px;
  height: 30px;
  padding-left: 1px;
  white-space: nowrap;
  overflow: hidden;
`;

const Bookmark = styled.a`
  display: flex;
  align-items: center;
  gap: 2px;
`;

const Extensions = styled.div`
  display: flex;
  align-items: center;
  gap: 8px;
  margin-left: auto;
  margin-right: -2px;
`;

const TabStrip = styled.div`
  display: flex;
  flex: none;
  align-items: flex-end;
  gap: 2px;
  height: 31px;
  padding-left: 19px;
  border-bottom: 1px solid #b5b5b5;
`;

const PageTab = styled.div<{ $active?: boolean }>`
  display: flex;
  align-items: center;
  flex: 0 0 173px;
  min-width: 0;
  height: ${(p) => (p.$active ? 28 : 27)}px;
  margin-bottom: ${(p) => (p.$active ? -1 : 0)}px;
  padding: 2px 6px 0 5px;
  border: 1px solid #b5b5b5;
  border-bottom: 0;
  border-radius: 4px 4px 0 0;
  background: ${(p) => (p.$active ? "#fff" : "#f1f2f2")};
  color: ${(p) => (p.$active ? "#000" : "#333")};
  a {
    flex: 1;
    min-width: 0;
    margin: 0 6px 0 3px;
    overflow: hidden;
    white-space: nowrap;
    mask-image: linear-gradient(90deg, #000 88%, transparent);
  }
  button {
    color: #888;
  }
`;

const NewTab = styled.button`
  flex: none;
  width: 25px;
  height: 26px;
  font-family: "Liberation Sans", sans-serif;
  font-size: 20px;
  color: #666;
  border-right: 1px solid #c5c5c5;
`;

const Page = styled.main`
  display: flex;
  flex: 1;
  min-height: 0;
`;

const Gutter = styled.div`
  flex: none;
  width: 13px;
  padding-top: 21px;
  background: #f5f6f6;
  border-right: 1px solid #e0e2e2;
  &::before {
    content: "";
    display: block;
    width: 6px;
    height: 28px;
    background: #fbd53a;
    border: 1px solid #eebc2d;
    border-left: 0;
  }
`;

const Article = styled.article`
  display: flex;
  flex-direction: column;
  flex: 1;
  min-width: 0;
  background: #fdfdfd;
  overflow: hidden;
  white-space: nowrap;
`;

const Blank = styled.div<{ $height: number }>`
  flex: none;
  height: ${(p) => p.$height}px;
  border-bottom: 1px solid #e2e2e2;
`;

const Question = styled.header`
  display: flex;
  flex: none;
  align-items: center;
  gap: 15px;
  height: 64px;
  background: #f8f8f8;
  border-bottom: 1px solid #e8e8e8;
  padding-top: 4px;
  h1 {
    font-size: 18px;
    line-height: 24px;
    color: #333;
  }
`;

const Stats = styled.p`
  && {
    padding: 20px 0 0 19px;
  }
  font-family: "Open Sans", "Noto Sans CJK SC", sans-serif;
  font-size: 14px;
  line-height: 20px;
  color: #2a6496;
`;

const Body = styled.p`
  && {
    padding: 16px 0 0 19px;
  }
  flex: none;
  font-size: 16px;
  line-height: 24px;
  color: #444;
`;

const Votes = styled.div`
  display: flex;
  flex: none;
  gap: 43px;
  height: 145px;
  padding: 38px 0 0 234px;
  border-bottom: 1px solid #ddd;
`;

const Vote = styled.button<{ $ink: string; $fill: string }>`
  display: flex;
  flex-direction: column;
  align-items: center;
  flex: none;
  width: 67px;
  height: 105px;
  color: ${(p) => p.$ink};
  font-size: 18px;
  line-height: 24px;
  i {
    display: flex;
    flex-direction: column;
    align-items: center;
    gap: 3px;
    width: 67px;
    height: 68px;
    margin-bottom: 11px;
    padding-top: 9px;
    border-radius: 50%;
    background: ${(p) => p.$fill};
    font-style: normal;
    font-size: 20px;
  }
`;

const Notice = styled.p`
  && {
    padding: 18px 0 0 5px;
  }
  flex: none;
  height: 71px;
  border-bottom: 1px solid #e2e2e2;
  font-size: 16px;
  line-height: 24px;
  color: #d9475c;
`;

const Answer = styled.h2`
  && {
    font-size: 14px;
  }
  display: flex;
  flex: none;
  height: 53px;
  align-items: center;
  border-bottom: 1px solid #ccc;
  color: #333;
  overflow: hidden;
`;

/* The first character is scrolled mostly past the left edge of the page. */
const Scrolled = styled.span`
  margin-left: -9px;
`;

const EditorBar = styled.div`
  display: flex;
  flex: none;
  align-items: center;
  height: 33px;
  padding-left: 6px;
  border-bottom: 1px solid #ccc;
  button {
    height: 24px;
    padding: 0 11px 0 15px;
    border: 1px solid #ccc;
    border-top: 0;
    border-bottom: 0;
  }
`;

const Editor = styled.textarea`
  flex: 1;
  min-height: 0;
  border: 0;
  resize: none;
  outline: 0;
  background: #fdfdfd;
`;

const PageScroll = styled.div`
  display: flex;
  flex: none;
  align-items: center;
  height: 17px;
  padding-left: 5px;
  background: #efefef;
  span {
    width: 295px;
    height: 13px;
    margin-left: 16px;
    background: #c1c1c1;
  }
`;

const BrowserStatus = styled.footer`
  display: flex;
  gap: 66px;
  flex: none;
  height: 7px;
  border-top: 1px solid #d5d5d5;
  background: #fafafa;
  padding: 4px 0 0 237px;
  &::before {
    content: "";
    width: 16px;
    height: 4px;
    border: 1px solid #2fb56a;
    border-bottom: 0;
    border-radius: 2px 2px 0 0;
  }
`;

const tabs = ["360导航_新一代安全上网", "答疑解惑_广联达服务新干线", "我想问下报表导出的问题_"];

function BrowserWindow() {
  return (
    <Browser>
      <Head>
        <Logo width="33" height="48" viewBox="0 0 33 48">
          <circle cx="8" cy="24" r="24" fill="#24bd6f" />
          <path d="M0 14C8 7 20 6 28 8C24 11 14 11 0 20z" fill="#fff" />
          <path d="M16 9C25 12 26 18 24 25H0" stroke="#fff" strokeWidth="4" fill="none" />
          <path d="M-4 33C6 40 22 38 29 28" stroke="#fff" strokeWidth="5" fill="none" />
        </Logo>
        <HeadRows>
          <TitleRow>
            <span>
              <Txt>360安全浏览器 9.1</Txt>
            </span>
            <BrowserMenu>
              <svg width="8" height="12" viewBox="0 0 8 12">
                <path d="M1 0l5 5-5 5" stroke="#999" fill="none" />
              </svg>
              {["文件", "查看", "收藏", "工具", "帮助"].map((m) => (
                <button key={m}>{m}</button>
              ))}
            </BrowserMenu>
            <WinButtons>
              <button aria-label="置顶">
                <svg width="12" height="9" viewBox="0 0 12 9">
                  <path d="M6 0l6 5H9v4H3V5H0z" fill="#555" />
                </svg>
              </button>
              <button aria-label="最小化">
                <svg width="12" height="9" viewBox="0 0 12 9">
                  <path d="M0 6.500h12" stroke="#555" />
                </svg>
              </button>
            </WinButtons>
          </TitleRow>
          <Address>
            <AddressButton aria-label="后退">
              <Icon name="back" />
            </AddressButton>
            <AddressButton aria-label="刷新">
              <Icon name="reload" />
            </AddressButton>
            <AddressButton aria-label="主页">
              <Icon name="home" />
            </AddressButton>
            <Url>
              <Icon name="site" />
              <p>
                http://e.<b>fwxgx.com</b>/question_16802
              </p>
              <Icon name="aperture" />
              <Icon name="bolt" />
            </Url>
            <AddressButton $plain aria-label="展开">
              <Icon name="chevron" />
            </AddressButton>
            <SearchBox aria-label="搜索" placeholder="点此搜索" />
          </Address>
        </HeadRows>
      </Head>
      <Bookmarks>
        <ToolButton $gap={9}>
          收藏
          <Caret $light />
        </ToolButton>
        {[
          ["nav360", "网址大全"],
          ["page", "交通违法"],
          ["house", "软件-2345"],
          ["weather", "佛山天气"],
          ["baidu", "百度文库"],
        ].map(([icon, label]) => (
          <Bookmark href="#" key={label}>
            <Icon name={icon} />
            <span>
              <Txt>{label}</Txt>
            </span>
          </Bookmark>
        ))}
        <svg width="11" height="12" viewBox="0 0 11 12">
          <path d="M0 1l5 5-5 5M5 1l5 5-5 5" stroke="#888" fill="none" />
        </svg>
        <Extensions>
          <Grip />
          <Icon name="apps" />
          <Caret $light />
          <Icon name="book" />
          <Icon name="translate" />
          <Caret $light />
        </Extensions>
      </Bookmarks>
      <TabStrip>
        {tabs.map((t, i) => (
          <PageTab key={t} $active={i === 2}>
            <Icon name={i ? "glodon" : "nav360"} />
            <a href="#">
              <Txt>{t}</Txt>
            </a>
            <button aria-label="关闭标签">
              <svg width="10" height="10" viewBox="0 0 10 10">
                <path d="M1 1l8 8M9 1L1 9" stroke="currentColor" />
              </svg>
            </button>
          </PageTab>
        ))}
        <NewTab aria-label="新标签">+</NewTab>
      </TabStrip>
      <Page>
        <Gutter />
        <Article>
          <Blank $height={49} />
          <Question>
            <svg width="20" height="31" viewBox="0 0 20 31">
              <rect x="-8" width="28" height="31" rx="2" fill="#fbc906" />
              <path d="M0 7c4-5 11-3 11 3 0 5-6 6-6 11M5 24v3" stroke="#fff" strokeWidth="2" fill="none" />
            </svg>
            <h1>我想问下报表导出的问题</h1>
          </Question>
          <Stats>浏览4 次 | 0 回答 | 0 答得好 | 0问得好</Stats>
          <Body>
            你好，我想问下，现在量算出来了，我要把定额录入到计价软件里，我现在的
            <br />
            保温板的，它的单位是立方，那么出现在报表里的这个工程量是立方量还是说
            <br />
            以保温板的厚度才行，像这种类型的还有其他材料，单位要么是体积要么是立
          </Body>
          <Votes>
            <Vote $ink="#dc4a62" $fill="#fed9df">
              <i>
                <svg width="20" height="20" viewBox="0 0 20 20" fill="none" stroke="currentColor">
                  <path d="M1.500 8.500h4v9h-4zM5.500 9c3-2 3-4 3-7 3-1 4 2 3 6h6l1 2-1 8h-12" />
                </svg>
                <span>0</span>
              </i>
              问得好
            </Vote>
            <Vote $ink="#d3982f" $fill="#feebc8">
              <i>
                <svg width="20" height="20" viewBox="0 0 20 20" fill="none" stroke="currentColor">
                  <path d="M10 1l3 6 6.500 1-5 4.500 1.500 6.500-6-3-6 3 1.500-6.500-5-4.500L7 7z" />
                </svg>
                <span>0</span>
              </i>
              我收藏
            </Vote>
            <Vote $ink="#3b93d6" $fill="#d3f0ff">
              <i>
                <svg width="20" height="20" viewBox="0 0 20 20" fill="none" stroke="currentColor">
                  <path d="M9 2.500H2.500v15h15V10M7 12c0-5 2-7 6-7V2l5 4.500-5 4V8c-3 0-5 1-6 4z" />
                </svg>
                <span>0</span>
              </i>
              我分享
            </Vote>
          </Votes>
          <Blank $height={61} />
          <Notice>请在以下交流中文明用语，共创和谐交流圈！</Notice>
          <Answer>
            <Scrolled>来回答</Scrolled>
          </Answer>
          <EditorBar>
            <button aria-label="插入图片">
              <Icon name="picture" />
            </button>
          </EditorBar>
          <Editor aria-label="回答内容" />
          <PageScroll>
            <svg width="8" height="8" viewBox="0 0 8 8">
              <path d="M6 0v8L2 4z" fill="#444" />
            </svg>
            <span />
          </PageScroll>
        </Article>
      </Page>
      <BrowserStatus />
    </Browser>
  );
}

/* ---------- annotations ---------- */

const Overlay = styled.svg`
  position: absolute;
  inset: 0;
  width: 100%;
  height: 100%;
  pointer-events: none;
`;

const arrows = [
  [529, 517, 573, 186],
  [1332, 239, 1314, 290],
  [1332, 239, 551, 518],
  [552, 512, 449, 619],
  [467, 630, 512, 630],
  [536, 629, 728, 626],
  [781, 631, 848, 632],
];

function RedArrow({ points: [x1, y1, x2, y2] }: { points: number[] }) {
  const len = Math.hypot(x2 - x1, y2 - y1);
  const ux = (x2 - x1) / len;
  const uy = (y2 - y1) / len;
  const bx = x2 - ux * 17;
  const by = y2 - uy * 17;
  return (
    <>
      <line x1={x1} y1={y1} x2={bx} y2={by} stroke="#f00" strokeWidth="3" strokeLinecap="round" />
      <polygon points={`${x2},${y2} ${bx - uy * 6},${by + ux * 6} ${bx + uy * 6},${by - ux * 6}`} fill="#f00" />
    </>
  );
}

export default function App() {
  return (
    <Desktop>
      <GlobalStyle />
      <AppWindow>
        <Toolbars />
        <Workspace>
          <Navigation />
          <Components />
          <Sheets />
        </Workspace>
        <Status />
      </AppWindow>
      <BrowserWindow />
      <CaptionButtons>
        <CaptionStub />
        <CaptionStub />
        <CaptionStub />
      </CaptionButtons>
      <Overlay viewBox="0 0 1532 840" preserveAspectRatio="none">
        {arrows.map((a, i) => (
          <RedArrow key={i} points={a} />
        ))}
      </Overlay>
    </Desktop>
  );
}
